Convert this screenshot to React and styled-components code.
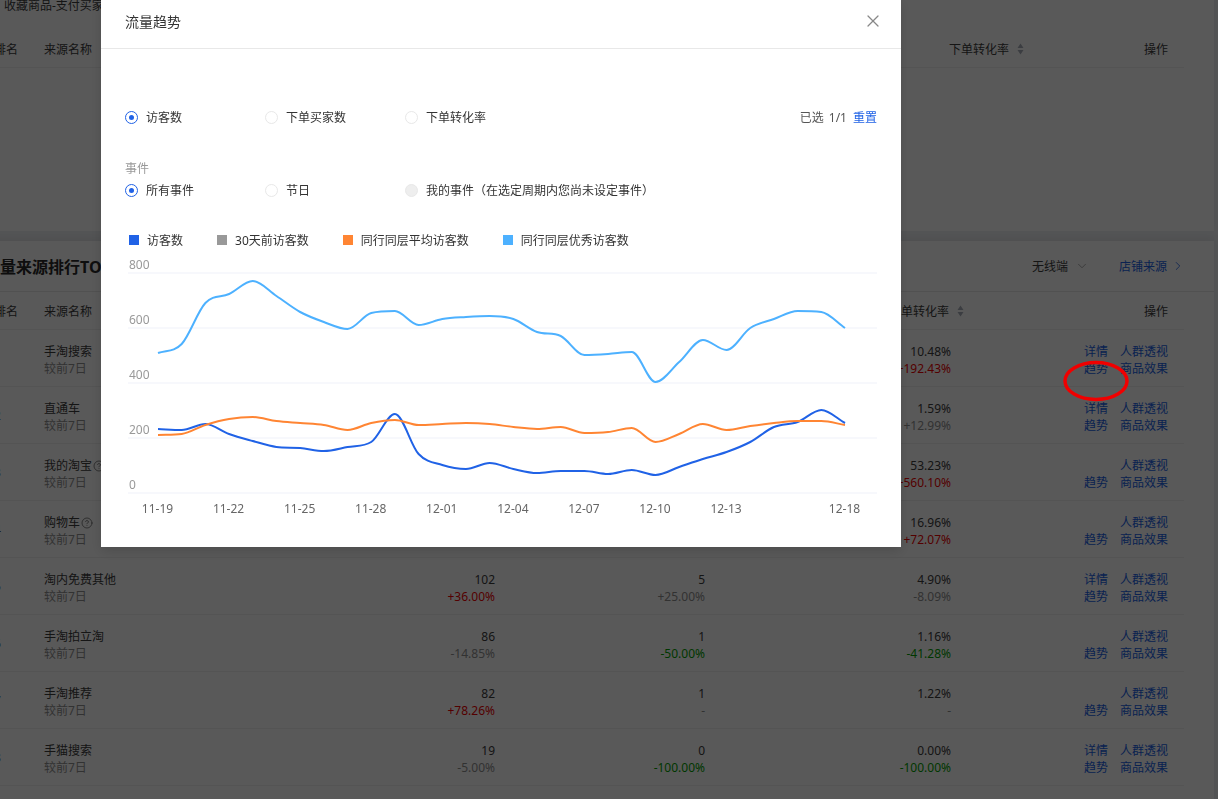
import React from 'react'
import styled, { createGlobalStyle } from 'styled-components'
import { X, CircleHelp, ChevronDown, ChevronRight } from 'lucide-react'

const GlobalStyle = createGlobalStyle`
    html, body {
        margin: 0;
        height: 100%;
        overflow: hidden;
        background: #f0f2f5;
    }
    body {
        font-family: "Noto Sans", "Noto Sans CJK SC", sans-serif;
        font-size: 12px;
        color: #3c3c3c;
    }
`

const Page = styled.div`
    width: 1250px;
    margin: -4px 0 0 -36px;
    display: flex;
    flex-direction: column;
    gap: 10px;
`

const Card = styled.section`
    background: #fff;
    padding: 0 30px ${p => (p.$tall ? 30 : 0)}px;
    box-shadow: 0 -4px 8px rgba(0, 0, 0, 0.06);
`

const TopLabel = styled.div`
    height: 20px;
    line-height: 20px;
    padding: 0 0 14px 10px;
`

const EmptyBody = styled.div`
    height: 163px;
`

const CardHead = styled.div`
    height: 51px;
    margin: 0 -30px;
    padding: 0 29px 0 20px;
    display: flex;
    align-items: center;
    border-bottom: 1px solid #e8e8e8;
    box-sizing: border-box;
`

const CardTitle = styled.h2`
    margin: 0;
    font-size: 16px;
    font-weight: 700;
    color: #2a2a2a;
    flex: 1;
`

const DeviceSelect = styled.span`
    display: flex;
    align-items: center;
    gap: 7px;
    margin-right: 30px;
`

const SourceLink = styled.a`
    display: flex;
    align-items: center;
    gap: 4px;
    color: #2062e6;
`

const TableRow = styled.div`
    display: grid;
    grid-template-columns: ${p => (p.$wide
        ? '50px 351px 100px 210px 306px 157px'
        : '50px 351px 100px 210px 246px 217px')};
    height: ${p => (p.$head ? 38 : 57)}px;
    box-sizing: border-box;
    border-bottom: 1px solid #efefef;
    align-items: ${p => (p.$head ? 'center' : 'start')};
`

const HeadCell = styled.div`
    display: flex;
    justify-content: ${p => (p.$right ? 'flex-end' : 'flex-start')};
    align-items: center;
`

const SortIcon = styled.svg`
    width: 7px;
    height: 12px;
    margin: 0 -13px 0 8px;
`

const Rank = styled.div`
    align-self: center;
`

const Cell = styled.div`
    padding-top: 13px;
    line-height: 17px;
    text-align: ${p => (p.$right ? 'right' : 'left')};
`

const SourceName = styled.div`
    display: flex;
    align-items: center;
    gap: 1px;
    height: 17px;
    svg {
        color: #555;
    }
`

const SubText = styled.div`
    color: ${p => (p.$tone === 'up' ? '#f00000' : p.$tone === 'down' ? '#00a000' : '#909090')};
`

const Ops = styled.div`
    padding-top: 13px;
    display: grid;
    grid-template-columns: 24px 48px;
    column-gap: 12px;
    justify-content: end;
    line-height: 17px;
    color: #2062e6;
    text-align: right;
`

const Dim = styled.div`
    position: fixed;
    inset: 0;
    background: rgba(0, 0, 0, 0.65);
    padding-left: 101px;
`

const Modal = styled.div`
    width: 800px;
    height: 547px;
    background: #fff;
    box-shadow: 0 4px 12px rgba(0, 0, 0, 0.15);
`

const ModalHead = styled.div`
    height: 49px;
    box-sizing: border-box;
    border-bottom: 1px solid #e8e8e8;
    padding: 0 18px 6px 24px;
    display: flex;
    align-items: center;
    justify-content: space-between;
    font-size: 14px;
    color: #333;
    svg {
        color: #888;
    }
`

const ModalBody = styled.div`
    padding: 58px 24px 0;
`

const OptionRow = styled.div`
    display: flex;
    align-items: center;
    height: 20px;
`

const Option = styled.label`
    width: 140px;
    display: flex;
    align-items: center;
    gap: 8px;
    color: #333;
    white-space: nowrap;
`

const RadioMark = styled.span`
    flex: none;
    width: 13px;
    height: 13px;
    box-sizing: border-box;
    border-radius: 50%;
    border: 1px solid ${p => (p.$on ? '#2062e6' : '#e8e8e8')};
    background: ${p => (p.$disabled ? '#eee' : '#fff')};
    display: flex;
    align-items: center;
    justify-content: center;
    &::after {
        content: '';
        width: 5px;
        height: 5px;
        border-radius: 50%;
        background: ${p => (p.$on ? '#2062e6' : 'transparent')};
    }
`

const Picked = styled.div`
    margin-left: auto;
    display: flex;
    gap: 6px;
    color: #555;
    word-spacing: 2px;
    a {
        color: #2062e6;
    }
`

const EventLabel = styled.div`
    margin-top: 32px;
    height: 21px;
    line-height: 20px;
    color: #999;
`

const Legend = styled.div`
    margin: 30px 0 5px 4px;
    height: 20px;
    display: flex;
    align-items: center;
    gap: 34px;
`

const LegendItem = styled.span`
    display: flex;
    align-items: center;
    gap: 8px;
    color: #333;
    &::before {
        content: '';
        width: 10px;
        height: 10px;
        background: ${p => p.$color};
    }
`

const ChartSvg = styled.svg`
    display: block;
    width: 749px;
    height: 265px;
    margin-left: 3px;
    font-size: 12px;
`

const Annotation = styled.svg`
    position: fixed;
    left: 1063px;
    top: 360px;
    width: 66px;
    height: 42px;
`

// sampled from the chart, one y per day in page pixels
const lightBlue = [353, 344, 303, 294, 281, 296, 312, 322, 329, 313, 311, 325, 319, 317, 316, 319, 332, 336, 355, 354, 352, 382, 362, 340, 350, 328, 319, 311, 312, 328]
const blue = [429, 430, 424, 434, 441, 447, 448, 451, 447, 442, 414, 454, 465, 469, 463, 469, 473, 471, 471, 474, 470, 475, 467, 459, 452, 442, 427, 422, 410, 423]
const orange = [435, 434, 425, 419, 417, 421, 423, 425, 430, 423, 420, 425, 424, 423, 424, 427, 429, 427, 433, 432, 428, 442, 434, 424, 430, 426, 423, 421, 421, 425]

const STEP = 23.69
const xAt = i => 158 + i * STEP

// monotone cubic, so the line never overshoots a sample
const smoothPath = ys => {
    const secant = ys.slice(1).map((y, i) => (y - ys[i]) / STEP)
    const slope = ys.map((_, i) => {
        if (i === 0) return secant[0]
        if (i === ys.length - 1) return secant[i - 1]
        const a = secant[i - 1]
        const b = secant[i]
        if (a * b <= 0) return 0
        return Math.sign(a) * Math.min(Math.abs(a) * 3, Math.abs(b) * 3, (Math.abs(a) + Math.abs(b)) / 2)
    })
    let d = `M${xAt(0)} ${ys[0]}`
    for (let i = 0; i < ys.length - 1; i++) {
        const h = STEP / 3
        d += `C${xAt(i) + h} ${ys[i] + slope[i] * h} ${xAt(i + 1) - h} ${ys[i + 1] - slope[i + 1] * h} ${xAt(i + 1)} ${ys[i + 1]}`
    }
    return d
}

const yTicks = [['800', 273], ['600', 328], ['400', 383], ['200', 438], ['0', 493]]
const xTicks = [['11-19', 0], ['11-22', 3], ['11-25', 6], ['11-28', 9], ['12-01', 12], ['12-04', 15], ['12-07', 18], ['12-10', 21], ['12-13', 24], ['12-18', 29]]

const Chart = () => (
    <ChartSvg viewBox="128 255 749 265">
        {yTicks.map(([label, y]) => (
            <g key={label}>
                <line x1="128" x2="877" y1={y} y2={y} stroke="#f7f8fc" strokeWidth="2" />
                <text x="129" y={y - 4} fill="#999">{label}</text>
            </g>
        ))}
        {xTicks.map(([label, i]) => (
            <text key={label} x={xAt(i) - 0.5} y="513" textAnchor="middle" fill="#666">{label}</text>
        ))}
        <path d={smoothPath(lightBlue)} fill="none" stroke="#4db1ff" strokeWidth="2" />
        <path d={smoothPath(blue)} fill="none" stroke="#2062e6" strokeWidth="2" />
        <path d={smoothPath(orange)} fill="none" stroke="#ff8533" strokeWidth="2" />
    </ChartSvg>
)

const Sort = () => (
    <SortIcon viewBox="0 0 7 12">
        <path d="M3.5 0.5L6.5 5H0.5Z M3.5 11.5L0.5 7H6.5Z" fill="#aab0bb" />
    </SortIcon>
)

const Radio = ({ on, disabled, children }) => (
    <Option>
        <RadioMark $on={on} $disabled={disabled} />
        {children}
    </Option>
)

const rows = [
    { name: '手淘搜索', rate: '10.48%', rateDiff: '+192.43%', rateTone: 'up', detail: true },
    { name: '直通车', rate: '1.59%', rateDiff: '+12.99%', detail: true },
    { name: '我的淘宝', help: true, rate: '53.23%', rateDiff: '+560.10%', rateTone: 'up' },
    { name: '购物车', help: true, rate: '16.96%', rateDiff: '+72.07%', rateTone: 'up' },
    { name: '淘内免费其他', visitors: '102', visitorsDiff: '+36.00%', visitorsTone: 'up', buyers: '5', buyersDiff: '+25.00%', rate: '4.90%', rateDiff: '-8.09%', detail: true },
    { name: '手淘拍立淘', visitors: '86', visitorsDiff: '-14.85%', buyers: '1', buyersDiff: '-50.00%', buyersTone: 'down', rate: '1.16%', rateDiff: '-41.28%', rateTone: 'down' },
    { name: '手淘推荐', visitors: '82', visitorsDiff: '+78.26%', visitorsTone: 'up', buyers: '1', buyersDiff: '-', rate: '1.22%', rateDiff: '-' },
    { name: '手猫搜索', visitors: '19', visitorsDiff: '-5.00%', buyers: '0', buyersDiff: '-100.00%', buyersTone: 'down', rate: '0.00%', rateDiff: '-100.00%', rateTone: 'down', detail: true },
]

const TableHead = ({ wide }) => (
    <TableRow $head $wide={wide}>
        <HeadCell>排名</HeadCell>
        <HeadCell>来源名称</HeadCell>
        <HeadCell />
        <HeadCell />
        <HeadCell $right>下单转化率<Sort /></HeadCell>
        <HeadCell $right>操作</HeadCell>
    </TableRow>
)

const App = () => (
    <>
        <GlobalStyle />
        <Page>
            <Card>
                <TopLabel>收藏商品-支付买家数</TopLabel>
                <TableHead wide />
                <EmptyBody />
            </Card>
            <Card $tall>
                <CardHead>
                    <CardTitle>流量来源排行TOP10</CardTitle>
                    <DeviceSelect>无线端<ChevronDown size={14} color="#888" strokeWidth={1.2} /></DeviceSelect>
                    <SourceLink>店铺来源<ChevronRight size={14} strokeWidth={1.4} /></SourceLink>
                </CardHead>
                <TableHead />
                {rows.map((row, index) => (
                    <TableRow key={row.name}>
                        <Rank>{index + 1}</Rank>
                        <Cell>
                            <SourceName>{row.name}{row.help && <CircleHelp size={12} strokeWidth={1.4} />}</SourceName>
                            <SubText>较前7日</SubText>
                        </Cell>
                        <Cell $right>
                            {row.visitors}
                            <SubText $tone={row.visitorsTone}>{row.visitorsDiff}</SubText>
                        </Cell>
                        <Cell $right>
                            {row.buyers}
                            <SubText $tone={row.buyersTone}>{row.buyersDiff}</SubText>
                        </Cell>
                        <Cell $right>
                            {row.rate}
                            <SubText $tone={row.rateTone}>{row.rateDiff}</SubText>
                        </Cell>
                        <Ops>
                            <span>{row.detail && '详情'}</span>
                            <span>人群透视</span>
                            <span>趋势</span>
                            <span>商品效果</span>
                        </Ops>
                    </TableRow>
                ))}
            </Card>
        </Page>
        <Dim>
            <Modal>
                <ModalHead>流量趋势<X size={20} strokeWidth={1.5} /></ModalHead>
                <ModalBody>
                    <OptionRow>
                        <Radio on>访客数</Radio>
                        <Radio>下单买家数</Radio>
                        <Radio>下单转化率</Radio>
                        <Picked>已选 1/1<a>重置</a></Picked>
                    </OptionRow>
                    <EventLabel>事件</EventLabel>
                    <OptionRow>
                        <Radio on>所有事件</Radio>
                        <Radio>节日</Radio>
                        <Radio disabled>我的事件（在选定周期内您尚未设定事件）</Radio>
                    </OptionRow>
                    <Legend>
                        <LegendItem $color="#2062e6">访客数</LegendItem>
                        <LegendItem $color="#999">30天前访客数</LegendItem>
                        <LegendItem $color="#ff8533">同行同层平均访客数</LegendItem>
                        <LegendItem $color="#4db1ff">同行同层优秀访客数</LegendItem>
                    </Legend>
                    <Chart />
                </ModalBody>
            </Modal>
        </Dim>
        <Annotation viewBox="0 0 66 42">
            <ellipse cx="33" cy="21" rx="31" ry="18.5" fill="none" stroke="#f00000" strokeWidth="3.5" />
        </Annotation>
    </>
)

export default App
